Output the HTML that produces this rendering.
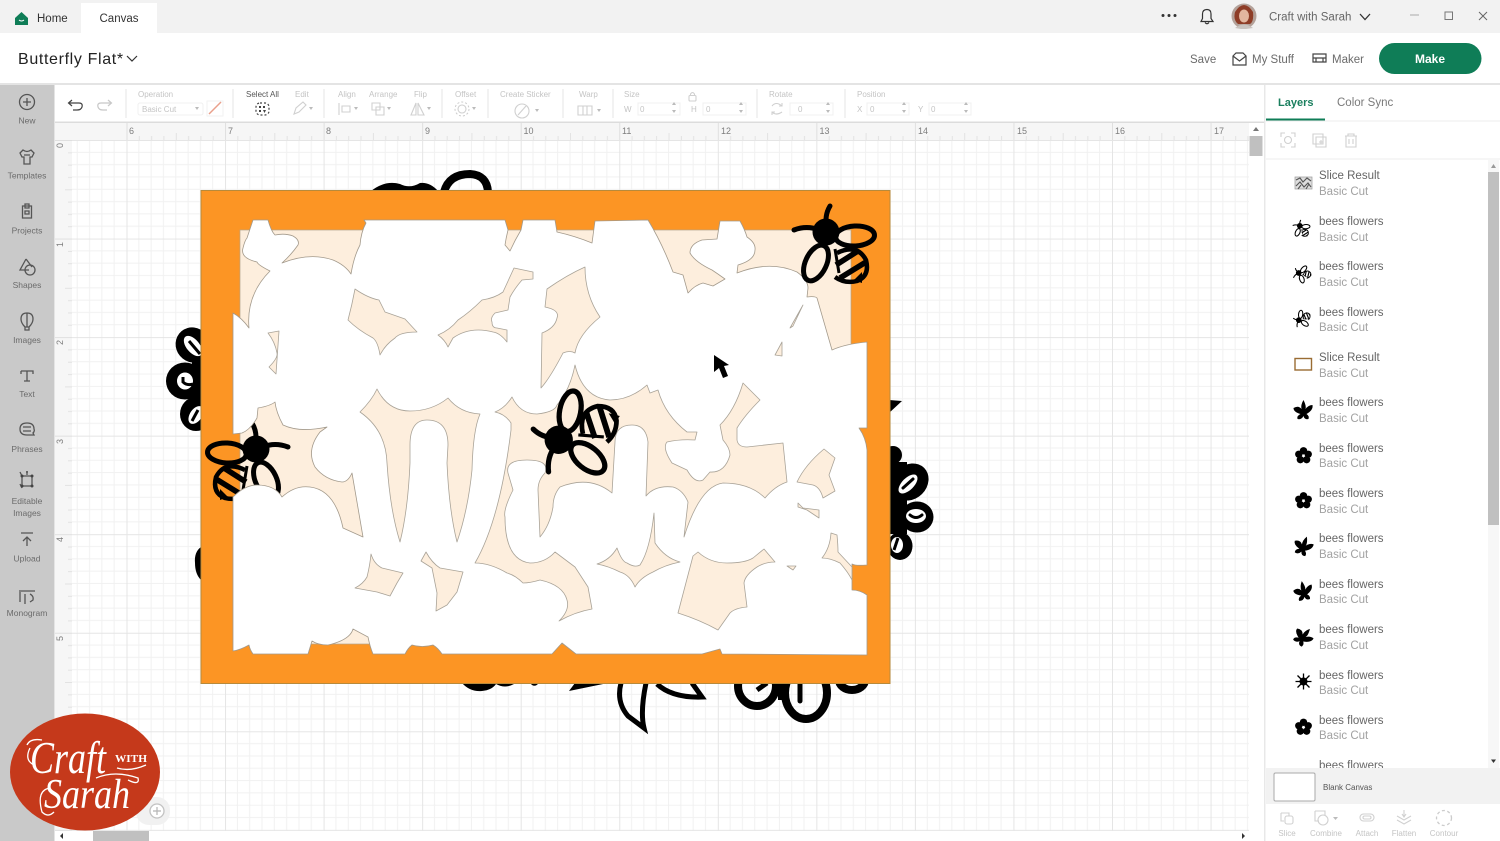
<!DOCTYPE html>
<html><head><meta charset="utf-8"><style>
html,body{margin:0;padding:0;width:1500px;height:841px;overflow:hidden;background:#fff}
svg{display:block}
text{font-family:"Liberation Sans",sans-serif}
.side{font-size:8.5px;fill:#6b6b6b;text-anchor:middle}
.tb{font-size:8px;fill:#c4c4c4}
.ru{font-size:9px;fill:#7d7d7d}
.nm{font-size:11.5px;fill:#666}
.sb{font-size:11.5px;fill:#a2a2a2}
.ic{fill:none;stroke:#555;stroke-width:1.3}
.lt{fill:none;stroke:#d0d0d0;stroke-width:1.1}
.bl{font-size:8px;fill:#c4c4c4;text-anchor:middle}
.h{fill:#fdeedd;stroke:#a9a398;stroke-width:.8;stroke-linejoin:round}
</style></head><body>
<svg width="1500" height="841" viewBox="0 0 1500 841" xmlns="http://www.w3.org/2000/svg">
<defs>
<pattern id="g" patternUnits="userSpaceOnUse" x="126.500" y="140" width="98.55" height="98.55">
<path d="M12.32 0V98.55M24.64 0V98.55M36.96 0V98.55M49.27 0V98.55M61.6 0V98.55M73.9 0V98.55M86.2 0V98.55M0 12.32H98.55M0 24.64H98.55M0 36.96H98.55M0 49.27H98.55M0 61.6H98.55M0 73.9H98.55M0 86.2H98.55" stroke="#f1f1f1" stroke-width="1" fill="none"/>
<path d="M.5 0V98.55M0 .5H98.55" stroke="#e5e5e5" stroke-width="1" fill="none"/>
</pattern>
<pattern id="rt" patternUnits="userSpaceOnUse" x="126.500" y="123" width="98.55" height="17">
<path d="M.5 0V17" stroke="#dfdfdf"/><path d="M12.8 13V17M25.1 13V17M37.4 13V17M49.8 10V17M62.1 13V17M74.4 13V17M86.7 13V17" stroke="#e2e2e2"/>
</pattern>
<pattern id="rl" patternUnits="userSpaceOnUse" x="55" y="140" width="17" height="98.55">
<path d="M0 .5H17" stroke="#dfdfdf"/><path d="M13 12.8H17M13 25.1H17M13 37.4H17M10 49.8H17M13 62.1H17M13 74.4H17M13 86.7H17" stroke="#e2e2e2"/>
</pattern>
<g id="bee">
<circle cx="-1" cy="-1" r="13.500"/>
<path d="M0-5Q-3-17 3-27M-8-3Q-20-8-33-3" fill="none" stroke="#000" stroke-width="5" stroke-linecap="round"/>
<g fill="none" stroke="#000" stroke-width="5">
<ellipse cx="-11" cy="30" rx="10.500" ry="19" transform="rotate(25 -11 30)"/>
<ellipse cx="28" cy="3" rx="19.500" ry="10" transform="rotate(-3 28 3)"/>
</g>
<g fill="none" stroke="#000">
<path d="M10 20Q30 10 39 27Q43 43 30 48Q18 51 8 44" stroke-width="4.500"/>
<path d="M9 32L31 18M13 45L39 29" stroke-width="5.500"/>
<path d="M8 16L12 40" stroke-width="3"/>
</g>
<path d="M27 47L35 50L35 39Z"/>
</g>
<path id="bf" d="M0-10Q3-4 2-1Q5-5 9-5Q10 0 3 4Q6 6 5 9Q1 10 0 6Q-2 10-6 9Q-7 6-3 4Q-10 2-10-2Q-5-5-2-1Q-3-5 0-10Z"/>
<g id="fl"><circle cx="0" cy="-4.500" r="3.500"/><circle cx="4.500" cy="-1.200" r="3.500"/><circle cx="3" cy="4" r="3.500"/><circle cx="-3" cy="4" r="3.500"/><circle cx="-4.500" cy="-1.200" r="3.500"/><circle cx="0" cy="0" r="1" fill="#fff"/></g>
</defs>

<rect width="1500" height="841" fill="#fff"/>
<!-- top bar -->
<rect width="1500" height="33" fill="#f2f2f2"/>
<rect x="81" y="3" width="76" height="30" fill="#fff"/>
<path d="M15 18L21.500 12L28 18V25H15Z" fill="#0f7d57"/><path d="M19 20Q21.500 22 24 20" stroke="#fff" fill="none"/>
<text x="37" y="22" font-size="11.500" fill="#333">Home</text>
<text x="99.500" y="22" font-size="11.500" fill="#333">Canvas</text>
<circle cx="1163" cy="15.500" r="1.500" fill="#333"/><circle cx="1169" cy="15.500" r="1.500" fill="#333"/><circle cx="1175" cy="15.500" r="1.500" fill="#333"/>
<path d="M1201 21.500H1213L1211 18.500V14Q1211 9.500 1207 9.500Q1202.500 9.500 1202.500 14V18.500ZM1205 22.500Q1207 25 1209 22.500" fill="none" stroke="#333" stroke-width="1.200"/>
<circle cx="1244" cy="16" r="12.500" fill="#b3a199"/><path d="M1235 12Q1244 -2 1253 12Q1254 22 1250 24L1238 24Q1233 20 1235 12Z" fill="#8e3d27"/><ellipse cx="1244" cy="16" rx="5" ry="6.500" fill="#e2b69f"/><path d="M1235 28Q1244 21 1253 28L1246 29H1241Z" fill="#c9c3bf"/>
<text x="1269" y="20.500" font-size="11.500" fill="#666">Craft with Sarah</text>
<path d="M1360 14L1365 19.500L1370 14" fill="none" stroke="#333" stroke-width="1.300"/>
<path d="M1410 15H1419" stroke="#aaa" stroke-width="1"/>
<rect x="1445" y="12" width="7.500" height="7.500" fill="none" stroke="#777" stroke-width="1"/>
<path d="M1479 12L1487 20M1487 12L1479 20" stroke="#666" stroke-width="1"/>

<!-- header -->
<text x="18" y="64" font-size="16" fill="#222" letter-spacing=".65">Butterfly Flat*</text>
<path d="M127 56L132 61L137 56" fill="none" stroke="#333" stroke-width="1.200"/>
<text x="1190" y="63" font-size="11.500" fill="#6b6b6b">Save</text>
<path d="M1233 56L1236 53H1243L1246 56V65H1233ZM1233 56L1239.500 61L1246 56" fill="none" stroke="#444" stroke-width="1.200"/>
<text x="1252" y="63" font-size="11.500" fill="#6b6b6b">My Stuff</text>
<path d="M1313 54H1326V62H1313ZM1313 58H1326M1316 58V62M1323 58V62" fill="none" stroke="#444" stroke-width="1.200"/>
<text x="1332" y="63" font-size="11.500" fill="#6b6b6b">Maker</text>
<rect x="1379" y="43" width="102.500" height="31" rx="15.500" fill="#0f7d57"/>
<text x="1430" y="63" font-size="12" font-weight="700" fill="#fff" text-anchor="middle">Make</text>
<rect y="83" width="1500" height="2" fill="#e4e4e4"/>

<!-- canvas -->
<rect x="72" y="140" width="1177" height="691" fill="url(#g)"/>
<rect x="55" y="123" width="1194" height="17" fill="#f6f6f6"/>
<rect x="126" y="123" width="1123" height="17" fill="url(#rt)"/>
<rect x="55" y="140" width="17" height="691" fill="#f6f6f6"/>
<rect x="55" y="140" width="17" height="691" fill="url(#rl)"/>
<rect x="55" y="121.500" width="1210" height="1.500" fill="#dcdcdc"/>
<g class="ru">
<text x="129" y="134">6</text><text x="228" y="134">7</text><text x="326" y="134">8</text><text x="425" y="134">9</text><text x="523.500" y="134">10</text><text x="622" y="134">11</text><text x="721" y="134">12</text><text x="819.500" y="134">13</text><text x="918" y="134">14</text><text x="1017" y="134">15</text><text x="1115" y="134">16</text><text x="1214" y="134">17</text>
<text transform="translate(63,148) rotate(-90)">0</text><text transform="translate(63,247) rotate(-90)">1</text><text transform="translate(63,345) rotate(-90)">2</text><text transform="translate(63,444) rotate(-90)">3</text><text transform="translate(63,542) rotate(-90)">4</text><text transform="translate(63,641) rotate(-90)">5</text>
</g>

<!-- flowers behind -->
<g>
<path d="M371 191Q385 180 400 184Q410 189 420 183Q430 182 438 191Z"/>
<path d="M444 192Q449 174 470 174Q487 175 488 192" fill="none" stroke="#000" stroke-width="8"/>
<!-- left flower -->
<ellipse cx="193" cy="345" rx="18" ry="17" transform="rotate(50 193 345)"/>
<ellipse cx="185" cy="381" rx="19" ry="18.500"/>
<ellipse cx="196" cy="414" rx="16" ry="17"/>
<rect x="192" y="345" width="10" height="70"/>
<ellipse cx="193" cy="346" rx="12" ry="6.500" fill="#fff" transform="rotate(50 193 346)"/>
<path d="M189 341L200 354" stroke="#000" stroke-width="3" fill="none"/>
<ellipse cx="185" cy="381" rx="8" ry="8.500" fill="#fff"/>
<path d="M183 377V382Q187 386 193 384" stroke="#000" stroke-width="3" fill="none"/>
<ellipse cx="196" cy="415" rx="6" ry="10" fill="#fff" transform="rotate(35 196 415)"/>
<path d="M198 410L192 421" stroke="#000" stroke-width="3" fill="none"/>
<path d="M201 547Q194 552 195 563Q195 574 201 580Z"/>
<path d="M889 400L902 401L889 413Z"/>
<!-- right flower -->
<rect x="889" y="462" width="18" height="72"/>
<ellipse cx="893" cy="455" rx="9" ry="9"/>
<ellipse cx="910" cy="482" rx="20" ry="17" transform="rotate(-45 910 482)"/>
<ellipse cx="917" cy="517" rx="16.500" ry="15.500"/>
<ellipse cx="900" cy="546" rx="12.500" ry="14"/>
<ellipse cx="908" cy="484" rx="12" ry="6" fill="#fff" transform="rotate(-45 908 484)"/>
<path d="M903 488L913 479" stroke="#000" stroke-width="3" stroke-linecap="round"/>
<ellipse cx="916" cy="516" rx="10" ry="7" fill="#fff"/>
<path d="M910 515Q916 520 922 515" stroke="#000" stroke-width="3" fill="none" stroke-linecap="round"/>
<ellipse cx="897" cy="545" rx="6" ry="8" fill="#fff"/>
<path d="M898 538L894 550" stroke="#000" stroke-width="3"/>
<!-- bottom -->
<path d="M462 683Q470 692 482 691Q492 690 496 684Q505 689 514 684L538 684Q534 688 530 683Z"/>
<path d="M569 691L608 683H575Z"/>
<path d="M621 683Q616 702 628 716L644 728Q640 712 646 683" fill="none" stroke="#000" stroke-width="5"/>
<path d="M657 684Q672 698 702 697L692 683" fill="none" stroke="#000" stroke-width="5"/>
<g fill="none" stroke="#000" stroke-width="8">
<ellipse cx="757" cy="686" rx="19" ry="20"/>
<ellipse cx="806" cy="693" rx="21" ry="26"/>
<ellipse cx="852" cy="680" rx="13" ry="10"/>
</g>
<path d="M778 683H787V700H778Z"/>
<path d="M800 684V701" stroke="#000" stroke-width="5" stroke-linecap="round"/>
<path d="M757 690L767 683" stroke="#000" stroke-width="5"/>
</g>

<!-- orange card -->
<rect x="201" y="190.500" width="689" height="493" fill="#fc9524" stroke="#b78a3b" stroke-width="1"/>
<rect x="240" y="230" width="611" height="414" fill="#fdeedd" stroke="#b3a68e" stroke-width=".7"/>
<use href="#bee" transform="translate(255,450) scale(-1,1)"/>
<path fill="#fff" stroke="#a39a8c" stroke-width=".8" stroke-linejoin="round" d="M253 220L268 220Q271 231 275 235Q285 233 293 236Q300 240 298 245Q291 255 282 263Q310 252 333 260Q345 265 351 274Q354 256 360 245Q361 232 366 223L364 220L505 220L508 230Q506 238 505 245L510 251Q515 240 521 230L523 220L555 220L557 232Q575 236 592 243L595 221L648 220Q662 243 673 272L683 275L688 293Q695 285 703 283L713 286L725 279Q718 274 712 270Q695 262 690 253Q690 244 702 240L717 239L720 221L740 221Q745 230 747 237Q756 243 755 250Q755 260 738 265L737 273Q770 260 797 272Q808 280 808 288L807 297Q815 296 817 298L832 350Q845 344 867 342L867 428L859 428Q866 438 867 450L867 565Q855 566 852 564L852 590Q860 590 867 595L867 655L722 654L720 649L702 654L576 654L562 643L552 654L442 654Q438 648 433 645Q422 648 412 645Q408 648 405 654L373 654Q370 647 368 637L353 629Q350 640 328 645Q318 645 312 641L308 654L253 654Q250 650 249 645Q240 650 233 651L233 497Q245 485 257 485Q275 485 282 497Q295 485 310 487Q335 490 343 528L363 537L352 473Q348 482 342 482Q325 480 315 467Q306 450 320 432L327 427Q300 433 283 425Q276 412 275 402Q270 406 258 408L257 418Q250 430 242 433L233 434L233 313Q242 318 249 328Q246 295 270 271Q258 265 257 262Q240 258 243 248Q245 240 247 238Z"/>
<!-- holes -->
<path class="h" d="M268 333L279 331L276 374L269 367Q278 358 277 353Q275 342 268 333Z"/>
<path class="h" d="M355 289Q368 298 379 300L385 312L405 319L417 332Q400 332 395 338Q385 345 380 355Q378 342 373 338Q358 330 348 320Q352 305 355 289Z"/>
<path class="h" d="M438 335Q450 330 458 320Q470 312 482 300Q495 298 503 292L514 268L533 272L533 279L522 280Q515 288 510 297L508 310L495 313Q490 318 492 322Q492 328 497 328L507 330L507 342Q500 333 493 332Q470 326 453 338L448 347Q445 340 438 335Z"/>
<path class="h" d="M585 267Q567 275 547 289L545 307Q560 310 557 318Q555 328 542 333L541 388Q550 378 563 353Q570 350 575 353Q578 335 600 317Q585 295 585 267Z"/>
<path class="h" d="M360 412Q372 400 377 389Q388 411 410 411Q432 411 448 398Q460 413 480 414Q473 430 472 470Q468 510 457 542Q449 510 447 463L448 445Q448 420 427 420Q410 420 410 445L410 463Q408 510 400 542Q390 510 387 463Q386 430 360 412Z"/>
<path class="h" d="M495 412Q505 408 512 397Q520 414 537 414Q555 412 557 405Q570 390 575 365Q583 398 610 400Q630 400 647 385L650 393L658 390Q665 415 687 432L697 432L695 440Q680 439 667 442Q662 448 672 463L687 470Q695 484 703 480L710 472Q725 473 730 455Q730 448 723 440L720 425Q735 410 743 383L760 400Q745 415 737 428L737 440Q738 447 747 447L783 443L787 482Q775 486 765 498Q750 483 723 483Q700 486 684 537L688 502Q683 490 673 487Q655 485 646 496L648 442Q646 425 632 425Q615 425 615 442L612 493Q590 475 560 487Q553 495 553 507Q550 525 540 537L538 490Q538 480 545 473Q550 460 527 460Q505 460 508 473L513 490Q503 510 505 517Q505 560 530 563Q545 563 555 552L575 567L588 587L592 609Q575 612 559 621Q570 610 567 600Q563 585 540 580Q530 583 523 583Q515 575 507 573Q490 563 475 563Q500 520 511 430L511 423Q505 414 495 412Z"/>
<path class="h" d="M371 554Q374 564 382 568L403 573L397 583L390 596L377 592L355 588Q363 584 367 577Q370 565 371 554Z"/>
<path class="h" d="M426 552Q432 563 440 568L463 572L457 592L447 605L436 611L437 593L432 568L421 561Z"/>
<path class="h" d="M597 564Q610 560 617 548Q622 562 627 563Q635 568 640 565Q650 550 654 513L655 543Q665 558 680 562Q665 565 653 572Q640 578 635 587Q630 575 620 572Q608 566 597 564Z"/>
<path class="h" d="M693 556L698 552Q710 563 727 563Q745 563 753 558L764 549L775 562Q765 562 757 567Q745 575 744 583L747 607Q735 608 730 613L718 630Q700 620 678 613Z"/>
<path class="h" d="M797 482Q805 465 824 449L835 458L829 475L835 491L823 498Q820 487 813 485Z"/>
<path class="h" d="M798 503L803 508L819 510L819 518L807 510L798 507Z"/>
<path class="h" d="M831 533L837 535Q838 545 838 552L852 567L852 580Q848 572 840 563Q830 558 822 558Q830 548 831 533Z"/>
<path class="h" d="M787 566L796 566L793 570Z"/>
<path class="h" d="M803 305L790 328L793 326Z"/>
<path class="h" d="M782 342L775 355L782 356Z"/>
<!-- bees on top -->
<use href="#bee" transform="translate(827,233)"/>
<use href="#bee" transform="translate(560,439) rotate(-76) scale(1.05)"/>
<path d="M714 355V372L719 368L723 378L728 376L724 366L729 365Z"/>

<!-- zoom control -->
<rect x="136" y="797" width="34" height="28" rx="13" fill="#f1f1f1"/>
<circle cx="157" cy="811" r="7" fill="#fff" stroke="#c2c2c2" stroke-width="1.300"/><path d="M153 811H161M157 807V815" stroke="#b5b5b5" stroke-width="1.200"/>

<!-- scrollbars canvas -->
<rect x="1249" y="123" width="14" height="708" fill="#fff"/>
<rect x="1249.500" y="136" width="13" height="20" fill="#c0c0c0"/>
<path d="M1256 127L1253 131H1259Z" fill="#777"/>
<rect x="55" y="831" width="1194" height="10" fill="#fff"/>
<rect x="93" y="831" width="56" height="10" fill="#c0c0c0"/>
<path d="M60 836L63 833V839Z" fill="#333"/><path d="M1245 836L1242 833V839Z" fill="#333"/>

<!-- toolbar -->
<rect x="55" y="85" width="1210" height="36.500" fill="#fff"/>
<path d="M69 103H79Q83 103 82 107Q81 110 77 110H73M72 100L68.500 103L72 106" fill="none" stroke="#444" stroke-width="1.200"/>
<path d="M111 103H101Q97 103 98 107Q99 110 103 110H107M108 100L111.500 103L108 106" fill="none" stroke="#c8c8c8" stroke-width="1.200"/>
<path d="M126 89V118M233 89V118M324 89V118M442 89V118M488 89V118M563 89V118M613 89V118M757 89V118M845 89V118" stroke="#e4e4e4"/>
<rect x="138" y="103" width="65" height="12" rx="2" fill="#fff" stroke="#f0f0f0"/>
<rect x="638" y="103" width="42" height="12" fill="#fff" stroke="#f0f0f0"/><rect x="703" y="103" width="43" height="12" fill="#fff" stroke="#f0f0f0"/><rect x="790" y="103" width="43" height="12" fill="#fff" stroke="#f0f0f0"/><rect x="867" y="103" width="42" height="12" fill="#fff" stroke="#f0f0f0"/><rect x="929" y="103" width="42" height="12" fill="#fff" stroke="#f0f0f0"/>
<g class="tb">
<text x="138" y="97">Operation</text>
<text x="246" y="97" style="fill:#555">Select All</text>
<text x="295" y="97">Edit</text><text x="338" y="97">Align</text><text x="369" y="97">Arrange</text><text x="414" y="97">Flip</text><text x="455" y="97">Offset</text><text x="500" y="97">Create Sticker</text><text x="579" y="97">Warp</text><text x="624" y="97">Size</text><text x="769" y="97">Rotate</text><text x="857" y="97">Position</text>
<text x="142" y="112">Basic Cut</text>
<text x="624" y="112">W</text><text x="640" y="112">0</text><text x="691" y="112">H</text><text x="706" y="112">0</text><text x="798" y="112">0</text><text x="857" y="112">X</text><text x="870" y="112">0</text><text x="918" y="112">Y</text><text x="931" y="112">0</text>
</g>
<path d="M195 107L199 107L197 110Z" fill="#bbb"/>
<rect x="207" y="101" width="16" height="15" fill="#fff" stroke="#f2f2f2"/><path d="M209 114L221 102" stroke="#e9a08c" stroke-width="1.500"/>
<rect x="256" y="103" width="13" height="12" rx="4" fill="none" stroke="#444" stroke-width="1.200" stroke-dasharray="2 2"/>
<path d="M259 106h2v2h-2zM263 106h2v2h-2zM259 110h2v2h-2zM263 110l3 0-1.500 3z" fill="#444"/>
<path d="M294 114L296 108L303 102L306 105L299 112Z" class="lt"/><path d="M309 107L313 107L311 110Z" fill="#bbb"/>
<path d="M339 103V115M342 106H350V112H342Z" class="lt"/><path d="M354 107L358 107L356 110Z" fill="#bbb"/>
<path d="M372 103H380V110H372ZM376 107H384V115H376Z" class="lt"/><path d="M387 107L391 107L389 110Z" fill="#bbb"/>
<path d="M416 115V103L411 115ZM418 115V103L424 115Z" class="lt"/><path d="M427 107L431 107L429 110Z" fill="#bbb"/>
<circle cx="462" cy="109" r="4" class="lt"/><circle cx="462" cy="109" r="7" fill="none" stroke="#ccc" stroke-dasharray="2 2"/><path d="M472 107L476 107L474 110Z" fill="#bbb"/>
<circle cx="522" cy="111" r="7" class="lt"/><path d="M518 115L526 106" class="lt"/><path d="M535 109L539 109L537 112Z" fill="#bbb"/>
<path d="M578 106H592V115H578ZM583 106V115M587 106V115" class="lt"/><path d="M597 109L601 109L599 112Z" fill="#bbb"/>
<path d="M672 105L674 102L676 105ZM672 110L674 113L676 110ZM739 105L741 102L743 105ZM739 110L741 113L743 110ZM826 105L828 102L830 105ZM826 110L828 113L830 110ZM902 105L904 102L906 105ZM902 110L904 113L906 110ZM964 105L966 102L968 105ZM964 110L966 113L968 110Z" fill="#bbb"/>
<rect x="689" y="95.500" width="7" height="5.500" rx="1" class="lt"/><path d="M690.500 95.500V94Q692.500 91 694.500 94V95.500" class="lt"/>
<path d="M772 106Q776 101 782 106M782 112Q776 116 772 112M782 103V106H779M772 115V112H775" class="lt"/>

<!-- right panel -->
<rect x="1265" y="85" width="235" height="756" fill="#fff"/>
<rect x="1264" y="85" width="1.500" height="756" fill="#e8e8e8"/>
<text x="1278" y="106" font-size="11" font-weight="700" fill="#1a7f5e">Layers</text>
<text x="1337" y="106" font-size="11.500" fill="#7a7a7a">Color Sync</text>
<rect x="1266" y="118.500" width="59" height="2" fill="#0f7d57"/>
<rect x="1266" y="120.500" width="234" height="1" fill="#ececec"/>
<rect x="1266" y="158.500" width="234" height="1" fill="#ededed"/>
<path d="M1281 137V133H1285M1291 133H1295V137M1295 143V147H1291M1285 147H1281V143" class="lt"/><circle cx="1288" cy="140" r="3.500" class="lt"/>
<path d="M1313 134H1323V144H1313ZM1316 137H1326V147H1316ZM1321 140V144M1319 142H1323" class="lt"/>
<path d="M1345 136H1357M1348 136V134H1354V136M1346 136V147H1356V136M1349 139V144M1353 139V144" class="lt"/>
<rect x="1488" y="160" width="11" height="610" fill="#f7f7f7"/>
<rect x="1488" y="172" width="11" height="353" fill="#c0c0c0"/>
<path d="M1493.500 164L1491 168H1496Z" fill="#999"/><path d="M1493.500 763L1491 759.500H1496Z" fill="#333"/>

<g class="nm">
<text x="1319" y="179">Slice Result</text><text x="1319" y="225">bees flowers</text><text x="1319" y="270">bees flowers</text><text x="1319" y="316">bees flowers</text><text x="1319" y="361">Slice Result</text><text x="1319" y="406">bees flowers</text><text x="1319" y="452">bees flowers</text><text x="1319" y="497">bees flowers</text><text x="1319" y="542">bees flowers</text><text x="1319" y="588">bees flowers</text><text x="1319" y="633">bees flowers</text><text x="1319" y="679">bees flowers</text><text x="1319" y="724">bees flowers</text><text x="1319" y="769">bees flowers</text>
</g>
<g class="sb">
<text x="1319" y="195">Basic Cut</text><text x="1319" y="241">Basic Cut</text><text x="1319" y="286">Basic Cut</text><text x="1319" y="331">Basic Cut</text><text x="1319" y="377">Basic Cut</text><text x="1319" y="422">Basic Cut</text><text x="1319" y="467">Basic Cut</text><text x="1319" y="513">Basic Cut</text><text x="1319" y="558">Basic Cut</text><text x="1319" y="603">Basic Cut</text><text x="1319" y="649">Basic Cut</text><text x="1319" y="694">Basic Cut</text><text x="1319" y="739">Basic Cut</text>
</g>
<!-- layer icons -->
<rect x="1295" y="177" width="17" height="12" fill="#ddd" stroke="#999" stroke-width=".7"/>
<path d="M1296 180L1300 178L1303 182L1307 178L1311 181M1296 186L1300 182L1304 187L1308 183L1311 187M1298 189L1301 185M1306 189L1309 184" stroke="#555" stroke-width="1.100" fill="none"/>
<use href="#bee" transform="translate(1300,226) scale(.21)"/>
<use href="#bee" transform="translate(1299,273) rotate(-45) scale(.21)"/>
<use href="#bee" transform="translate(1299,320) rotate(-80) scale(.21)"/>
<rect x="1295" y="358.500" width="16.500" height="11.500" fill="#fff" stroke="#9a6c33" stroke-width="1.400"/>
<use href="#bf" transform="translate(1303.500,410)"/>
<use href="#fl" transform="translate(1303.500,455.500) scale(1.050)"/>
<use href="#fl" transform="translate(1303.500,500.500) scale(1.050)"/>
<use href="#bf" transform="translate(1303.500,546) rotate(20)"/>
<use href="#bf" transform="translate(1303.500,591) rotate(-10)"/>
<use href="#bf" transform="translate(1303.500,636.500) rotate(40)"/>
<g transform="translate(1303.500,681.500)"><circle r="4"/><path d="M-8 0H8M0-8V8M-6-6L6 6M-6 6L6-6" stroke="#000" stroke-width="1.300"/></g>
<use href="#fl" transform="translate(1303.500,727) scale(1.050)"/>
<rect x="1266" y="768" width="234" height="36" fill="#f2f2f2"/>
<rect x="1274" y="773" width="41" height="28" rx="1.500" fill="#fff" stroke="#a9a9a9" stroke-width="1"/>
<text x="1323" y="790" font-size="8" fill="#555">Blank Canvas</text>
<path d="M1281 813H1289V816M1281 813V821H1284" class="lt"/><rect x="1285" y="816" width="8" height="8" rx="2" class="lt"/>
<path d="M1315 811H1325V815M1315 811V821H1319" class="lt"/><circle cx="1323" cy="820" r="5" class="lt"/><path d="M1333 817L1338 817L1335.500 820Z" fill="#bbb"/>
<rect x="1360" y="814" width="14" height="7" rx="3.500" class="lt"/><rect x="1363" y="816" width="8" height="3" rx="1.500" class="lt"/>
<path d="M1397 816L1404 820L1411 816M1397 820L1404 824L1411 820M1404 810V817M1402 814L1404 817L1406 814" class="lt"/>
<circle cx="1444" cy="818" r="7.500" fill="none" stroke="#ccc" stroke-width="1.300" stroke-dasharray="3 2.500"/>
<text x="1287" y="836" class="bl">Slice</text><text x="1326" y="836" class="bl">Combine</text><text x="1367" y="836" class="bl">Attach</text><text x="1404" y="836" class="bl">Flatten</text><text x="1444" y="836" class="bl">Contour</text>

<!-- sidebar -->
<rect x="0" y="85" width="54.500" height="756" fill="#c9c9c9"/>
<circle cx="27" cy="102" r="7.500" class="ic"/><path d="M23 102H31M27 98V106" class="ic"/>
<path d="M23 150L20 153L22 157H24V164H30V157H32L34 153L31 150Q27 153 23 150ZM24 155H30" class="ic"/>
<path d="M22.500 206H31.500V218H22.500ZM25 204H29V208H25ZM25 211H29V214H25Z" class="ic"/>
<path d="M26 259L20 270H29M26 259L32 267" class="ic"/><circle cx="30" cy="270" r="5" class="ic"/>
<path d="M27 313Q21 313 21 319Q21 323 25 327H29Q33 323 33 319Q33 313 27 313ZM25 327V330H29V327M27 313V327" class="ic"/>
<path d="M21 371H33V374M21 371V374M27 371V381M24 381H30" class="ic" stroke-width="1.200"/>
<path d="M27 423Q20 423 20 429Q20 435 27 435H34L33 433Q35 431 34 429Q34 423 27 423ZM23 427H31M23 431H31" class="ic"/>
<path d="M22 476H32M22 476V486H32V476M22 476L20 472M22 488L20 484" class="ic"/><circle cx="22" cy="476" r="1.500" fill="#444"/><circle cx="32" cy="476" r="1.500" fill="#444"/><circle cx="22" cy="486" r="1.500" fill="#444"/><circle cx="32" cy="486" r="1.500" fill="#444"/><path d="M26 472H28M27 471V475" class="ic"/>
<path d="M21 533H33M27 546V537M23 541L27 537L31 541" class="ic"/>
<path d="M19 591H35M20 592V602M25 594V604M30 594Q34 596 33 600L30 602" class="ic"/>
<text x="27" y="123.500" class="side">New</text>
<text x="27" y="178.500" class="side">Templates</text>
<text x="27" y="233.500" class="side">Projects</text>
<text x="27" y="288" class="side">Shapes</text>
<text x="27" y="343" class="side">Images</text>
<text x="27" y="397" class="side">Text</text>
<text x="27" y="452" class="side">Phrases</text>
<text x="27" y="504" class="side">Editable</text>
<text x="27" y="516" class="side">Images</text>
<text x="27" y="561.500" class="side">Upload</text>
<text x="27" y="616" class="side">Monogram</text>

<!-- logo -->
<ellipse cx="85" cy="772" rx="75" ry="58.500" fill="#c5391b"/>
<g fill="#fff">
<text x="30" y="773" font-size="46" font-style="italic" textLength="76" lengthAdjust="spacingAndGlyphs" style="font-family:'Liberation Serif',serif">Craft</text>
<text x="115" y="762" font-size="10.500" font-weight="700" textLength="32" lengthAdjust="spacingAndGlyphs" style="font-family:'Liberation Serif',serif">WITH</text>
<text x="44" y="808" font-size="42" font-style="italic" textLength="86" lengthAdjust="spacingAndGlyphs" style="font-family:'Liberation Serif',serif">Sarah</text>
</g>
<path d="M117 768Q130 772 146 765M96 778Q115 770 138 778Q140 786 128 780M50 788Q36 790 42 812Q48 818 54 812M27 745Q30 738 42 740M34 765Q24 760 30 748" fill="none" stroke="#fff" stroke-width="1.300"/>
</svg>
</body></html>
